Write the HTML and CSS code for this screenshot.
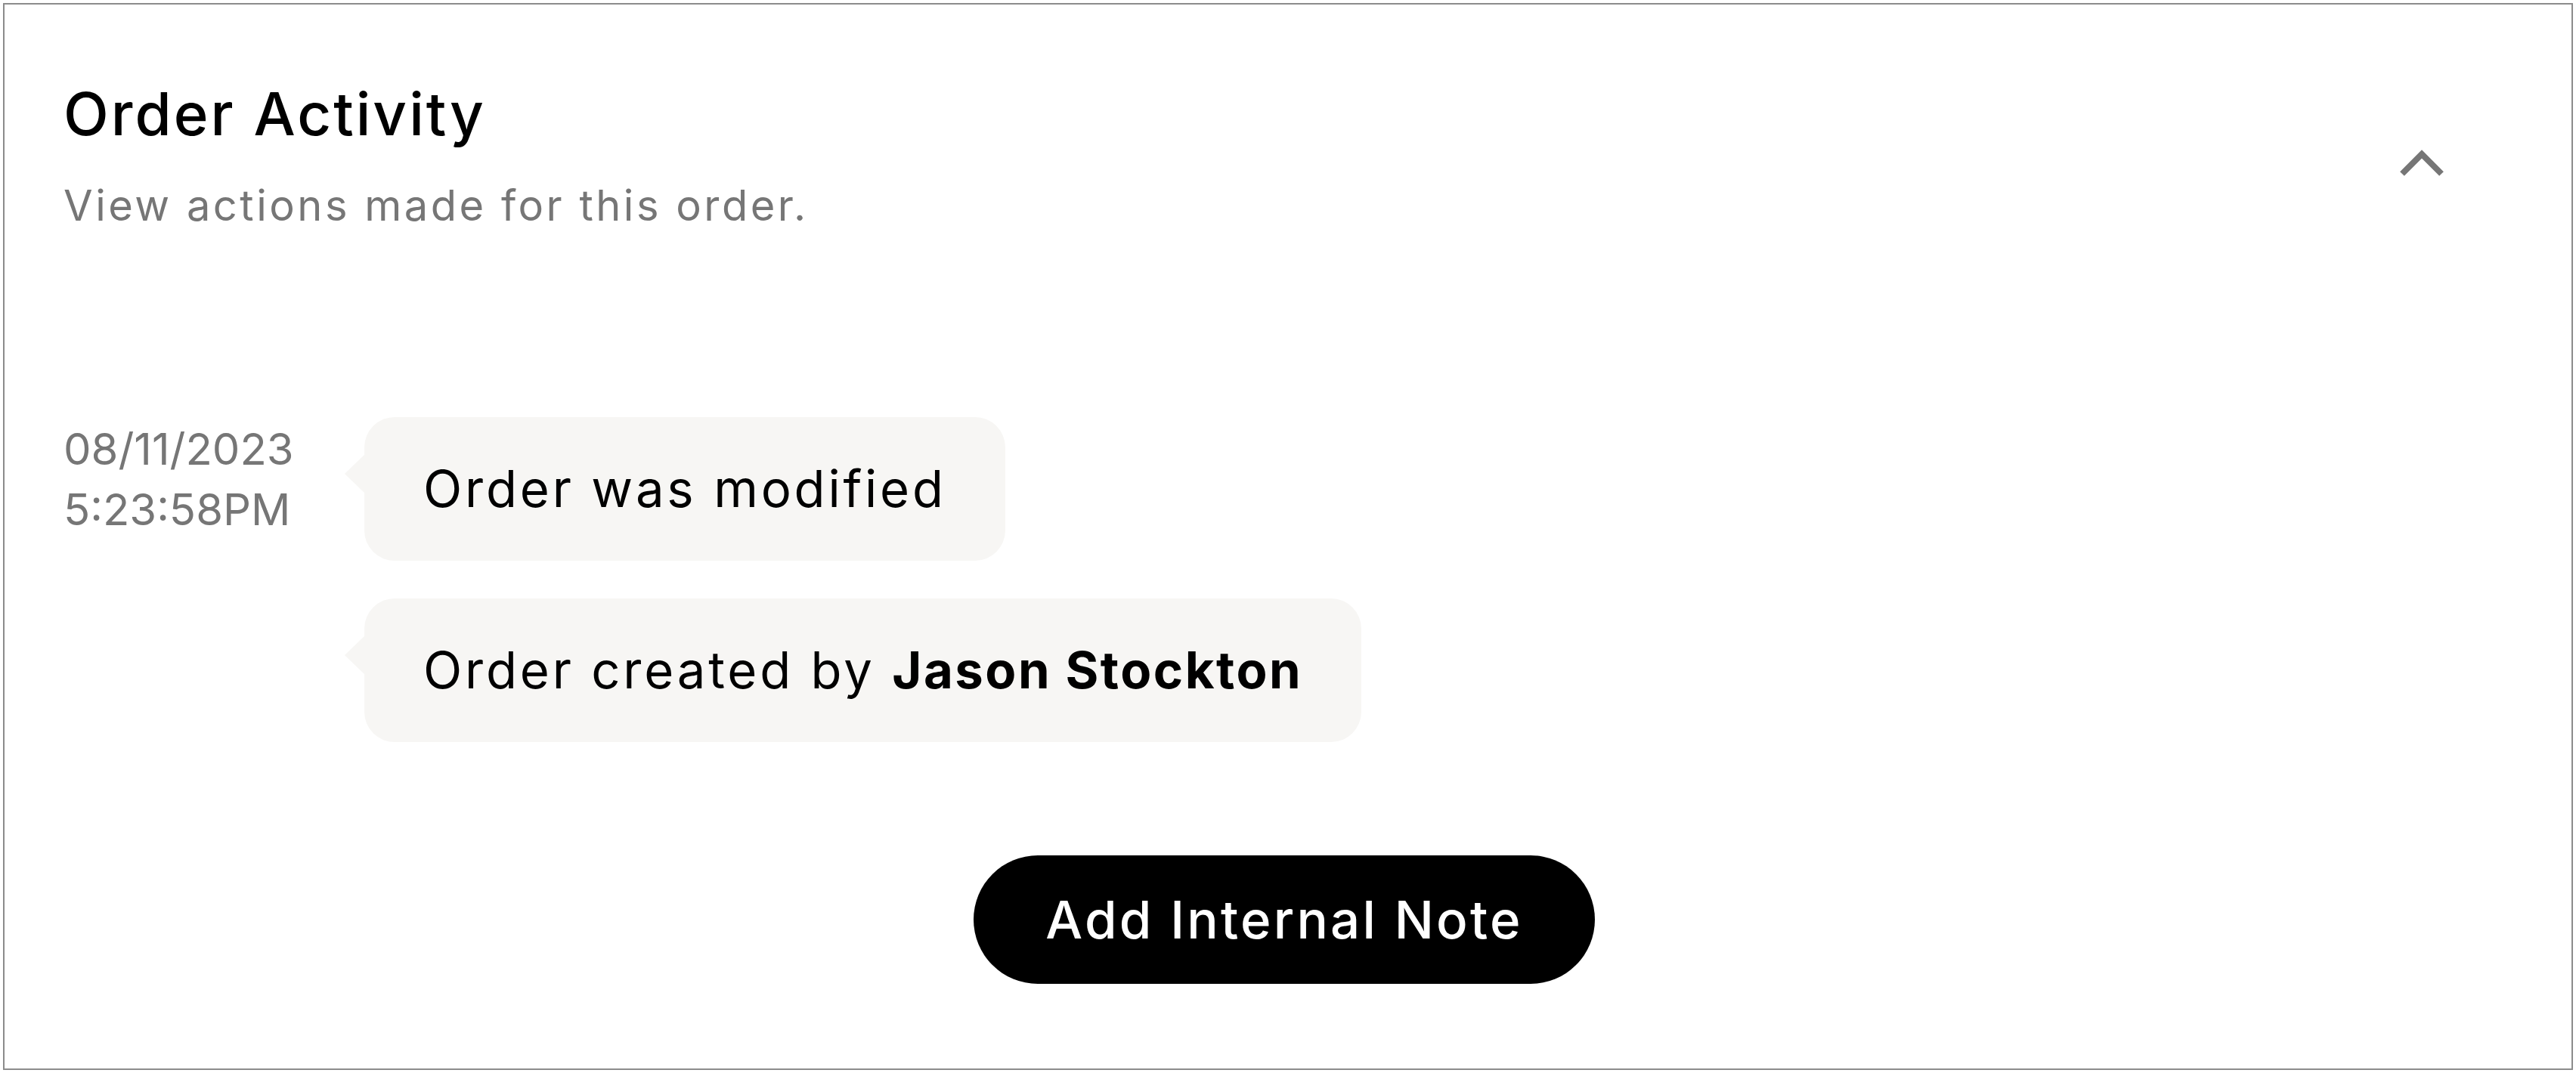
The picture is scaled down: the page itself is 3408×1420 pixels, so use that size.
FILE: index.html
```html
<!DOCTYPE html>
<html lang="en">
<head>
<meta charset="utf-8">
<title>Order Activity</title>
<link rel="stylesheet" href="styles.css">
</head>
<body>
<section class="card">
  <header class="card-header">
    <div class="heading">
      <h1 class="title">Order Activity</h1>
      <p class="subtitle">View actions made for this order.</p>
    </div>
    <button class="toggle" type="button" aria-label="Collapse">
      <svg width="68" height="46" viewBox="0 0 68 46"><polyline points="8,36 34,10 60,36" fill="none" stroke="#767676" stroke-width="8" stroke-linejoin="miter"/></svg>
    </button>
  </header>
  <div class="timeline">
    <div class="stamp">
      <div>08/11/2023</div>
      <div>5:23:58PM</div>
    </div>
    <div class="events">
      <div class="bubble">Order was modified</div>
      <div class="bubble">Order created by <strong>Jason Stockton</strong></div>
    </div>
  </div>
  <div class="actions">
    <button class="note-btn" type="button">Add Internal Note</button>
  </div>
</section>
</body>
</html>
```

FILE: styles.css
```css
* { box-sizing: border-box; }
html, body { margin: 0; padding: 0; background: #fff; }
body {
  padding: 4px;
  font-family: Inter, "Noto Sans", sans-serif;
  color: #000;
}
.card {
  width: 3400px;
  border: 2px solid #8c8c8c;
  padding: 97px 0 112px 78px;
}
.card-header {
  display: flex;
  justify-content: space-between;
  align-items: flex-start;
}
.title {
  margin: 0;
  font-size: 78px;
  line-height: 96px;
  font-weight: 500;
  letter-spacing: 3px;
}
.subtitle {
  margin: 33px 0 0;
  font-size: 56px;
  line-height: 80px;
  color: #767676;
  letter-spacing: 3.5px;
}
.toggle {
  margin: 91px 164px 0 0;
  padding: 0;
  border: 0;
  background: none;
  display: flex;
}
.timeline {
  display: flex;
  margin-top: 240px;
}
.stamp {
  width: 398px;
  padding-top: 2px;
  font-size: 58px;
  line-height: 80px;
  color: #767676;
}
.events {
  display: flex;
  flex-direction: column;
  align-items: flex-start;
  gap: 50px;
}
.bubble {
  position: relative;
  background: #f7f6f4;
  border-radius: 40px;
  padding: 48px 78px;
  font-size: 67px;
  line-height: 94px;
  letter-spacing: 3.8px;
  white-space: nowrap;
}
.bubble::before {
  content: "";
  position: absolute;
  left: -26px;
  top: 50px;
  border-right: 26px solid #f7f6f4;
  border-top: 25px solid transparent;
  border-bottom: 25px solid transparent;
}
.bubble strong {
  font-weight: 700;
  letter-spacing: 2.5px;
}
.actions {
  display: flex;
  justify-content: center;
  margin-top: 150px;
  padding-right: 88px;
}
.note-btn {
  height: 170px;
  padding: 0 95px;
  border: 0;
  border-radius: 85px;
  background: #000;
  color: #fff;
  font-family: Inter, "Noto Sans", sans-serif;
  font-size: 69px;
  font-weight: 500;
  letter-spacing: 3.2px;
}
```
